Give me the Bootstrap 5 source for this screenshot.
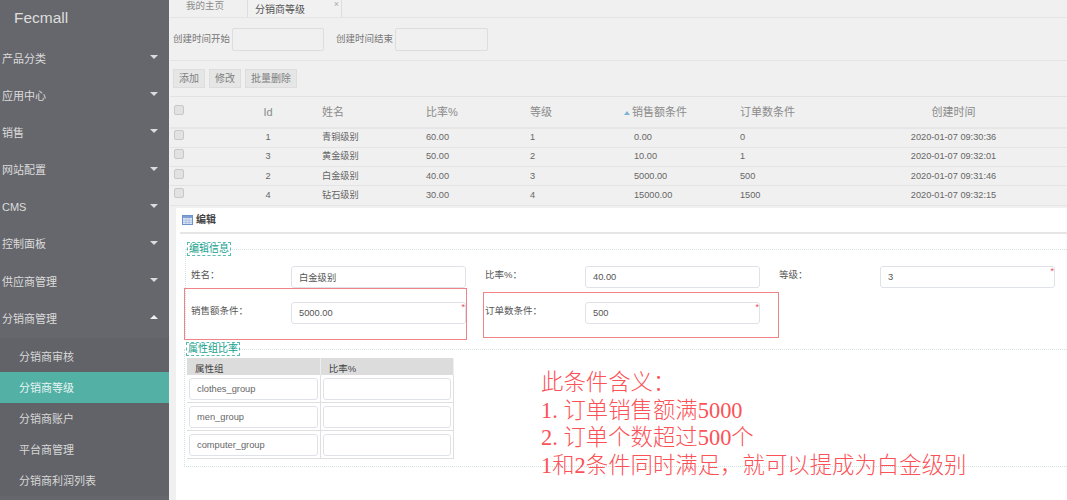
<!DOCTYPE html>
<html lang="zh-CN">
<head>
<meta charset="utf-8">
<title>分销商等级</title>
<link rel="stylesheet" href="https://cdn.jsdelivr.net/npm/bootstrap@5.3.0/dist/css/bootstrap.min.css">
<style>
html,body{height:500px;overflow:hidden}
body{font-family:"Liberation Sans","Noto Sans CJK SC",sans-serif;font-size:10px;color:#666;background:#f0f0f0;line-height:1.2}
.fm-shell{height:500px;position:relative}
.fm-side{width:169px;flex:none;background:#66676c;color:#dcdcdc;height:500px;overflow:hidden}
.fm-logo{font-size:15.5px;height:40.5px;padding:8px 0 0 14px;color:#dedede;line-height:19px}
.fm-menu{font-size:11px;height:37.2px;padding:0 11px 0 2px;color:#dcdcdc;margin-top:0}
.fm-tri{width:0;height:0;border-left:4.5px solid transparent;border-right:4.5px solid transparent;border-top:4.5px solid #dcdcdc;margin-top:-4px}
.fm-tri.fm-up{border-top:0;border-bottom:4.5px solid #f0f0f0}
.fm-sub{background:#626368;padding-top:2.5px}
.fm-sub .nav-link{font-size:11px;height:31px;padding:0 0 0 19px;color:#d8d8d8;line-height:33px}
.fm-sub .nav-link.active{background:#52b0a5;color:#e8f5f3}
.fm-main{flex:1;min-width:0;height:500px;overflow:hidden;margin-left:1px}
.fm-tabs{height:18px;border-bottom:1px solid #e4e4e4;padding-left:16px;overflow:hidden}
.fm-tab-a{font-size:9.5px;width:61px;line-height:11px;color:#8a8a8a;padding-left:0}
.fm-tab-b{width:95px;height:18px;border-left:1px solid #ddd;border-right:1px solid #ddd;font-size:10px;color:#555;padding:2px 0 0 7px;line-height:15px;position:relative;background:#f1f1f1}
.fm-x{position:absolute;right:2px;top:0;font-size:9px;color:#aaa;line-height:9px}
.fm-filter{height:43px;border-bottom:1px solid #e4e4e4;padding-left:3px;font-size:9.5px;color:#777}
.fm-filter .form-control{height:23px;padding:0;border:1px solid #ddd;border-radius:2px;background:#f0f0f0;box-shadow:none}
.fm-in1{width:92px;margin:0 12px 0 2px}
.fm-in2{width:93px;margin-left:2px}
.fm-tools{height:36px;border-bottom:1px solid #e2e2e2;padding:8px 0 0 3px;gap:4px}
.fm-tools .btn{height:19px;padding:0 5px;font-size:10px;line-height:17px;color:#808080;background:#e6e6e6;border:1px solid #ddd;border-radius:0}
.fm-grid{table-layout:fixed;width:897px;margin:0;--bs-table-bg:transparent;color:#666}
.fm-grid th,.fm-grid td{padding:0;border-bottom:1px solid #e4e4e4;vertical-align:middle;font-weight:400;color:#666;box-shadow:none}
.fm-grid th{height:31px;font-size:11px;color:#8b8b8b;border-bottom:2px solid #e6e6e6;padding-top:1px}
.fm-grid td{height:19.3px;font-size:9.2px}
.fm-c0{width:44px}.fm-c1{width:108px}.fm-c2{width:104px}.fm-c3{width:104px}.fm-c4{width:93px}.fm-c5{width:117px}.fm-c6{width:100px}.fm-c7{width:227px}
.fm-pad{padding-left:11px!important}
.fm-sort{display:inline-block;width:0;height:0;border-left:3px solid transparent;border-right:3px solid transparent;border-bottom:4px solid #7fb2d6;margin:0 2px 1px -10px;vertical-align:middle}
.fm-ck{display:block;width:10px;height:10px;margin:0 0 5px 4px;border-radius:2px;background:#e2e2e2;border:1px solid #c8c8c8;float:none}
.fm-panel{margin-left:6px;background:#fff;height:292px;margin-top:2px;padding:0 0 0 6px;position:relative}
.fm-head{height:26px;border-bottom:2px solid #e6e6e6;font-size:10px;font-weight:700;color:#444;gap:3px;margin-left:-2px;padding-left:2px}
.fm-set{border:0;border-top:1px dotted #cfe3e0;border-left:1px dotted #cfe3e0;margin:15px 0 0 3px;padding:0;height:89px;position:relative;min-width:0;display:block}
.fm-set2{border-bottom:1px dotted #cfe3e0;margin:11px 0 0 2px;height:118px}
.fm-leg{position:absolute;left:1px;top:-8px;width:auto;float:none;margin:0;font-size:10px;line-height:12px;color:#12a08e;border:1px dashed #53bdb0;background:#fff;padding:0 1px}
.fm-form{display:grid;grid-template-columns:100px 175px 19px 100px 175px 19px 101px 175px;row-gap:14px;padding:16px 0 0 5px;font-size:9.5px;color:#555}
.fm-lab{padding-top:3px;line-height:12px}
.fm-fld{position:relative;height:22px}
.fm-fld .form-control{height:22px;padding:0 7px;font-size:9.3px;color:#555;border:1px solid #dfe2e8;border-radius:3px;line-height:20px}
.fm-star{position:absolute;right:1px;top:1px;color:#ea4a5a;font-size:9px;line-height:9px}
.fm-attr{width:267px;table-layout:fixed;margin:8px 0 0 2px;--bs-table-bg:transparent}
.fm-attr th{height:17px;padding:0 0 0 8px;background:#dcdcdc;font-size:9.5px;font-weight:400;color:#444;border:0;border-right:1px solid #eee}
.fm-attr td{height:28px;padding:3px 2px 2px;border-bottom:1px solid #dfdfdf;border-right:1px solid #dfdfdf}
.fm-attr .form-control{height:22px;padding:0 7px;font-size:9.3px;color:#666;border:1px solid #dfe2e8;border-radius:3px}
.fm-box{position:absolute;border:1px solid #f08385;pointer-events:none}
.fm-box1{left:184px;top:288px;width:283px;height:52px}
.fm-box2{left:483px;top:292px;width:296px;height:46px}
.fm-note{position:absolute;left:541px;top:369px;font-family:"Liberation Serif","Noto Sans CJK SC",serif;font-size:22.4px;line-height:27.6px;font-weight:300;color:#fb5258;white-space:nowrap}
.fm-dot{letter-spacing:5.6px}
</style>
</head>
<body>
<div class="fm-shell d-flex">
  <aside class="fm-side">
    <div class="fm-logo">Fecmall</div>
    <nav>
      <div class="fm-menu d-flex align-items-center justify-content-between">产品分类<i class="fm-tri"></i></div>
      <div class="fm-menu d-flex align-items-center justify-content-between">应用中心<i class="fm-tri"></i></div>
      <div class="fm-menu d-flex align-items-center justify-content-between">销售<i class="fm-tri"></i></div>
      <div class="fm-menu d-flex align-items-center justify-content-between">网站配置<i class="fm-tri"></i></div>
      <div class="fm-menu d-flex align-items-center justify-content-between">CMS<i class="fm-tri"></i></div>
      <div class="fm-menu d-flex align-items-center justify-content-between">控制面板<i class="fm-tri"></i></div>
      <div class="fm-menu d-flex align-items-center justify-content-between">供应商管理<i class="fm-tri"></i></div>
      <div class="fm-menu d-flex align-items-center justify-content-between">分销商管理<i class="fm-tri fm-up"></i></div>
      <div class="nav flex-column fm-sub">
        <a class="nav-link" href="#">分销商审核</a>
        <a class="nav-link active" href="#">分销商等级</a>
        <a class="nav-link" href="#">分销商账户</a>
        <a class="nav-link" href="#">平台商管理</a>
        <a class="nav-link" href="#">分销商利润列表</a>
      </div>
    </nav>
  </aside>
  <main class="fm-main">
    <div class="fm-tabs d-flex">
      <div class="fm-tab-a">我的主页</div>
      <div class="fm-tab-b">分销商等级<span class="fm-x">×</span></div>
    </div>
    <div class="fm-filter d-flex align-items-center">
      <span>创建时间开始</span><input class="form-control fm-in1" type="text" aria-label="创建时间开始">
      <span>创建时间结束</span><input class="form-control fm-in2" type="text" aria-label="创建时间结束">
    </div>
    <div class="fm-tools d-flex align-items-start">
      <button class="btn" type="button">添加</button>
      <button class="btn" type="button">修改</button>
      <button class="btn" type="button">批量删除</button>
    </div>
    <table class="table fm-grid">
      <colgroup><col class="fm-c0"><col class="fm-c1"><col class="fm-c2"><col class="fm-c3"><col class="fm-c4"><col class="fm-c5"><col class="fm-c6"><col class="fm-c7"></colgroup>
      <thead><tr><th><span class="fm-ck"></span></th><th class="text-center">Id</th><th>姓名</th><th>比率%</th><th>等级</th><th class="fm-pad"><i class="fm-sort"></i>销售额条件</th><th>订单数条件</th><th class="text-center">创建时间</th></tr></thead>
      <tbody>
        <tr><td><span class="fm-ck"></span></td><td class="text-center">1</td><td>青铜级别</td><td>60.00</td><td>1</td><td class="fm-pad">0.00</td><td>0</td><td class="text-center">2020-01-07 09:30:36</td></tr>
        <tr><td><span class="fm-ck"></span></td><td class="text-center">3</td><td>黄金级别</td><td>50.00</td><td>2</td><td class="fm-pad">10.00</td><td>1</td><td class="text-center">2020-01-07 09:32:01</td></tr>
        <tr><td><span class="fm-ck"></span></td><td class="text-center">2</td><td>白金级别</td><td>40.00</td><td>3</td><td class="fm-pad">5000.00</td><td>500</td><td class="text-center">2020-01-07 09:31:46</td></tr>
        <tr><td><span class="fm-ck"></span></td><td class="text-center">4</td><td>钻石级别</td><td>30.00</td><td>4</td><td class="fm-pad">15000.00</td><td>1500</td><td class="text-center">2020-01-07 09:32:15</td></tr>
      </tbody>
    </table>
    <section class="fm-panel">
      <div class="fm-head d-flex align-items-center">
        <svg width="11" height="10" viewBox="0 0 11 10" aria-hidden="true"><rect x=".5" y=".5" width="10" height="9" fill="#dfe8f5" stroke="#6f93cc"/><rect x="1" y="1" width="9" height="2" fill="#7fa0d6"/><path d="M4 3v6M7 3v6M1 5.2h9M1 7.4h9" stroke="#9db5dc" stroke-width=".7"/></svg>
        <span>编辑</span>
      </div>
      <fieldset class="fm-set">
        <legend class="fm-leg">编辑信息</legend>
        <div class="fm-form">
          <div class="fm-lab">姓名：</div><div class="fm-fld"><input class="form-control" value="白金级别" aria-label="姓名"></div><div></div>
          <div class="fm-lab">比率%：</div><div class="fm-fld"><input class="form-control" value="40.00" aria-label="比率"></div><div></div>
          <div class="fm-lab">等级：</div><div class="fm-fld"><input class="form-control" value="3" aria-label="等级"><span class="fm-star">*</span></div>
          <div class="fm-lab">销售额条件：</div><div class="fm-fld"><input class="form-control" value="5000.00" aria-label="销售额条件"><span class="fm-star">*</span></div><div></div>
          <div class="fm-lab">订单数条件：</div><div class="fm-fld"><input class="form-control" value="500" aria-label="订单数条件"><span class="fm-star">*</span></div>
        </div>
      </fieldset>
      <fieldset class="fm-set fm-set2">
        <legend class="fm-leg">属性组比率</legend>
        <table class="table fm-attr">
          <thead><tr><th>属性组</th><th>比率%</th></tr></thead>
          <tbody>
            <tr><td><input class="form-control" value="clothes_group" aria-label="属性组"></td><td><input class="form-control" aria-label="比率"></td></tr>
            <tr><td><input class="form-control" value="men_group" aria-label="属性组"></td><td><input class="form-control" aria-label="比率"></td></tr>
            <tr><td><input class="form-control" value="computer_group" aria-label="属性组"></td><td><input class="form-control" aria-label="比率"></td></tr>
          </tbody>
        </table>
      </fieldset>
    </section>
  </main>
  <div class="fm-box fm-box1"></div>
  <div class="fm-box fm-box2"></div>
  <div class="fm-note">此条件含义：<br>1<span class="fm-dot">.</span>订单销售额满5000<br>2<span class="fm-dot">.</span>订单个数超过500个<br>1和2条件同时满足，就可以提成为白金级别</div>
</div>
<script src="https://cdn.jsdelivr.net/npm/bootstrap@5.3.0/dist/js/bootstrap.bundle.min.js"></script>
</body>
</html>
